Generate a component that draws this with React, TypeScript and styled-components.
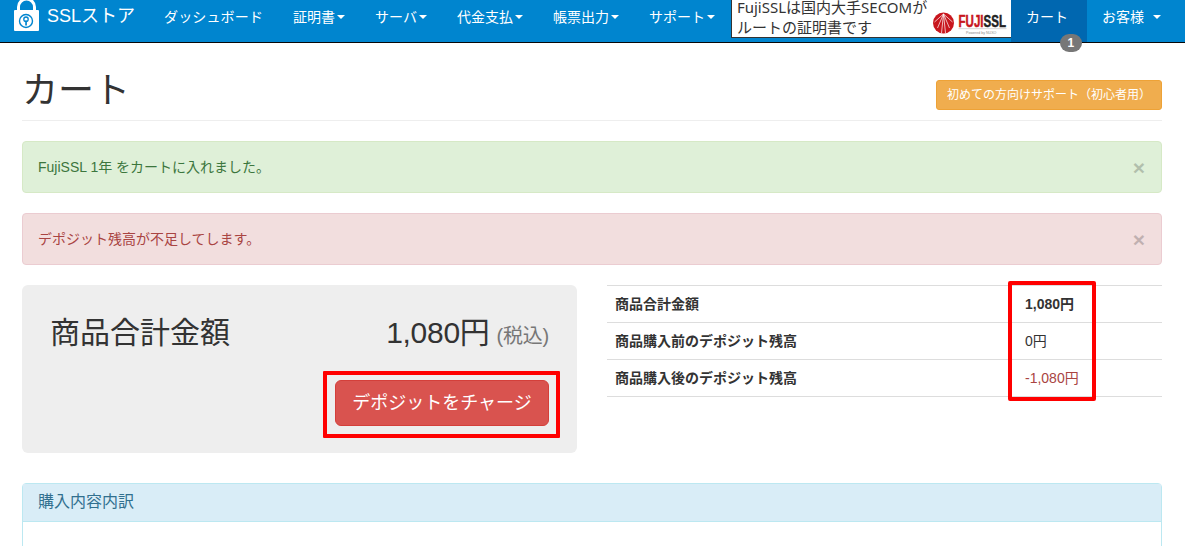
import React from "react";
import styled, { createGlobalStyle } from "styled-components";

const GlobalStyle = createGlobalStyle`
  html, body {
    margin: 0;
    height: 546px;
    overflow: hidden;
    background: #fff;
    color: #333;
    font-family: "Liberation Sans", "Noto Sans CJK JP", sans-serif;
    font-size: 14px;
    line-height: 20px;
  }
  * { box-sizing: border-box; }
`;

const Navbar = styled.nav`
  display: flex;
  height: 43px;
  background: #0085cf;
  border-bottom: 1px solid #080808;
`;

const Brand = styled.a`
  display: flex;
  align-items: flex-start;
  width: 149px;
  height: 42px;
  padding-left: 14px;
  gap: 7px;
  color: #fff;
  font-size: 18px;
  overflow: hidden;
`;

const BrandName = styled.span`
  margin-top: 6px;
`;

const NavItem = styled.a<{ $active?: boolean; $wide?: boolean }>`
  display: flex;
  align-items: center;
  height: 42px;
  padding: 0 ${(p) => (p.$active ? "19px" : "15px")} 8px 15px;
  color: #fff;
  white-space: nowrap;
  position: relative;
  letter-spacing: ${(p) => (p.$wide ? "0.15px" : "0")};
  background: ${(p) => (p.$active ? "#0067b0" : "transparent")};
`;

const Caret = styled.span<{ $gap?: number }>`
  display: inline-block;
  margin-left: ${(p) => p.$gap ?? 2}px;
  border-top: 4px solid #fff;
  border-left: 4px solid transparent;
  border-right: 4px solid transparent;
`;

const CartBadge = styled.span`
  position: absolute;
  left: 49px;
  top: 34px;
  width: 22px;
  height: 18px;
  border-radius: 10px;
  background: #777;
  color: #fff;
  font-size: 12px;
  font-weight: bold;
  line-height: 18px;
  text-align: center;
`;

const Banner = styled.div`
  display: flex;
  justify-content: space-between;
  width: 280px;
  height: 38px;
  margin-left: 1px;
  background: #fff;
  border-left: 1px solid #333;
  border-bottom: 1px solid #333;
  color: #333;
`;

const BannerText = styled.div`
  margin-top: -3px;
  padding-left: 5px;
  font-family: "Noto Sans", "Noto Sans CJK JP", sans-serif;
  font-size: 15px;
  line-height: 20px;
  white-space: nowrap;
`;

const Content = styled.main`
  padding: 0 23px 0 22px;
`;

const PageHeader = styled.header`
  display: flex;
  justify-content: space-between;
  align-items: flex-start;
  margin-top: 28px;
  padding-bottom: 9px;
  border-bottom: 1px solid #eee;
`;

const Title = styled.h1`
  margin: 0;
  font-size: 36px;
  font-weight: 400;
  line-height: 40px;
`;

const HelpButton = styled.a`
  margin-top: 9px;
  padding: 5px 10px;
  background: #f0ad4e;
  border: 1px solid #eea236;
  border-radius: 3px;
  color: #fff;
  font-size: 12px;
  line-height: 18px;
`;

const Alert = styled.div<{ $kind: "success" | "danger" }>`
  display: flex;
  justify-content: space-between;
  align-items: center;
  height: 52px;
  margin-top: 20px;
  padding: 0 16px 0 15px;
  border: 1px solid ${(p) => (p.$kind === "success" ? "#d6e9c6" : "#ebccd1")};
  border-radius: 4px;
  background: ${(p) => (p.$kind === "success" ? "#dff0d8" : "#f2dede")};
  color: ${(p) => (p.$kind === "success" ? "#3c763d" : "#a94442")};
`;

const Close = styled.span`
  color: #000;
  opacity: 0.2;
  font-size: 21px;
  font-weight: bold;
  line-height: 21px;
`;

const SummaryRow = styled.section`
  display: grid;
  grid-template-columns: 555px 555px;
  column-gap: 30px;
  margin-top: 20px;
`;

const Well = styled.div`
  height: 168px;
  padding: 31px 28px 27px;
  background: #eee;
  border-radius: 6px;
`;

const WellHead = styled.div`
  display: flex;
  justify-content: space-between;
  align-items: baseline;
  font-size: 30px;
  line-height: 33px;
`;

const Price = styled.span`
  letter-spacing: -0.3px;
`;

const Small = styled.small`
  margin-left: 7px;
  color: #777;
  font-size: 20px;
  letter-spacing: -0.2px;
`;

const WellActions = styled.div`
  display: flex;
  justify-content: flex-end;
  margin-top: 27px;
`;

const ChargeButton = styled.a`
  position: relative;
  display: block;
  width: 214px;
  height: 46px;
  background: #d9534f;
  border: 1px solid #d43f3a;
  border-radius: 6px;
  color: #fff;
  font-size: 18px;
  line-height: 44px;
  text-align: center;
  white-space: nowrap;

  &::after {
    content: "";
    position: absolute;
    left: -13px;
    right: -12px;
    top: -10px;
    bottom: -13px;
    border: 4px solid #f00;
    border-radius: 1px;
  }
`;

const TableWrap = styled.div`
  position: relative;
  align-self: start;
`;

const Table = styled.table`
  width: 100%;
  border-collapse: collapse;
  table-layout: fixed;
  border-top: 1px solid #ddd;
`;

const Row = styled.tr`
  height: 37px;
  border-bottom: 1px solid #ddd;
`;

const Label = styled.th`
  width: 410px;
  padding: 0 8px;
  font-weight: bold;
  text-align: left;
`;

const Value = styled.td<{ $bold?: boolean; $danger?: boolean }>`
  padding: 0 8px;
  font-weight: ${(p) => (p.$bold ? "bold" : "normal")};
  color: ${(p) => (p.$danger ? "#a94442" : "#333")};
`;

const Highlight = styled.div`
  position: absolute;
  left: 401px;
  top: -4px;
  width: 88px;
  height: 120px;
  border: 4px solid #f00;
  border-radius: 2px;
`;

const Panel = styled.section`
  margin-top: 30px;
  height: 120px;
  border: 1px solid #bce8f1;
  border-radius: 4px;
`;

const PanelHeading = styled.h3`
  margin: 0;
  height: 38px;
  padding: 0 15px;
  background: #d9edf7;
  border-bottom: 1px solid #bce8f1;
  color: #31708f;
  font-size: 16px;
  font-weight: 400;
  line-height: 36px;
`;

const LockIcon = () => (
  <svg width="26" height="42" viewBox="0 0 26 42">
    <path d="M4.5 12V7a8 8 0 0 1 16 0v5" fill="none" stroke="#fff" strokeWidth="3" />
    <rect x="0" y="10" width="25" height="21" rx="1" fill="#fff" />
    <circle cx="12" cy="21" r="6.5" fill="none" stroke="#0085cf" strokeWidth="1.4" />
    <circle cx="12" cy="19.2" r="2.2" fill="none" stroke="#0085cf" strokeWidth="1.3" />
    <rect x="11.2" y="20.5" width="1.7" height="5" fill="#0085cf" />
  </svg>
);

const FujiLogo = () => (
  <svg width="78" height="37" viewBox="0 0 78 37">
    <circle cx="10.5" cy="23" r="10.5" fill="#c8161d" />
    <path
      d="M10.5 14L1.5 22M10.5 14L4.5 28M10.5 14L8.5 33M10.5 14L12.5 33M10.5 14L16.5 28M10.5 14L19.5 22"
      stroke="#fff"
      strokeWidth="0.7"
    />
    <text
      transform="translate(25.5 27) scale(0.68 1)"
      fontFamily="Liberation Sans, sans-serif"
      fontSize="17"
      fontWeight="bold"
      strokeWidth="0.5"
    >
      <tspan fill="#c8161d" stroke="#c8161d">FUJI</tspan>
      <tspan fill="#222" stroke="#222">SSL</tspan>
    </text>
    <rect x="25.5" y="28.5" width="48" height="0.6" fill="#bbb" />
    <text x="33" y="33.5" fontFamily="Liberation Sans, sans-serif" fontSize="3.6" fill="#888">
      Powered by NUXO
    </text>
  </svg>
);

const menus = ["証明書", "サーバ", "代金支払", "帳票出力", "サポート"];

const rows = [
  { label: "商品合計金額", value: "1,080円", bold: true },
  { label: "商品購入前のデポジット残高", value: "0円" },
  { label: "商品購入後のデポジット残高", value: "-1,080円", danger: true },
];

const App: React.FC = () => {
  return (
    <>
      <GlobalStyle />
      <Navbar>
        <Brand>
          <LockIcon />
          <BrandName>SSLストア</BrandName>
        </Brand>
        <NavItem $wide>ダッシュボード</NavItem>
        {menus.map((menu) => (
          <NavItem key={menu}>
            {menu}
            <Caret />
          </NavItem>
        ))}
        <Banner>
          <BannerText>
            FujiSSLは国内大手SECOMが
            <br />
            ルートの証明書です
          </BannerText>
          <FujiLogo />
        </Banner>
        <NavItem $active>
          カート
          <CartBadge>1</CartBadge>
        </NavItem>
        <NavItem>
          お客様
          <Caret $gap={9} />
        </NavItem>
      </Navbar>
      <Content>
        <PageHeader>
          <Title>カート</Title>
          <HelpButton>初めての方向けサポート（初心者用）</HelpButton>
        </PageHeader>
        <Alert $kind="success">
          FujiSSL 1年 をカートに入れました。
          <Close>×</Close>
        </Alert>
        <Alert $kind="danger">
          デポジット残高が不足してします。
          <Close>×</Close>
        </Alert>
        <SummaryRow>
          <Well>
            <WellHead>
              <span>商品合計金額</span>
              <span>
                <Price>1,080円</Price>
                <Small>(税込)</Small>
              </span>
            </WellHead>
            <WellActions>
              <ChargeButton>デポジットをチャージ</ChargeButton>
            </WellActions>
          </Well>
          <TableWrap>
            <Table>
              <tbody>
                {rows.map((row) => (
                  <Row key={row.label}>
                    <Label>{row.label}</Label>
                    <Value $bold={row.bold} $danger={row.danger}>
                      {row.value}
                    </Value>
                  </Row>
                ))}
              </tbody>
            </Table>
            <Highlight />
          </TableWrap>
        </SummaryRow>
        <Panel>
          <PanelHeading>購入内容内訳</PanelHeading>
        </Panel>
      </Content>
    </>
  );
};

export default App;
